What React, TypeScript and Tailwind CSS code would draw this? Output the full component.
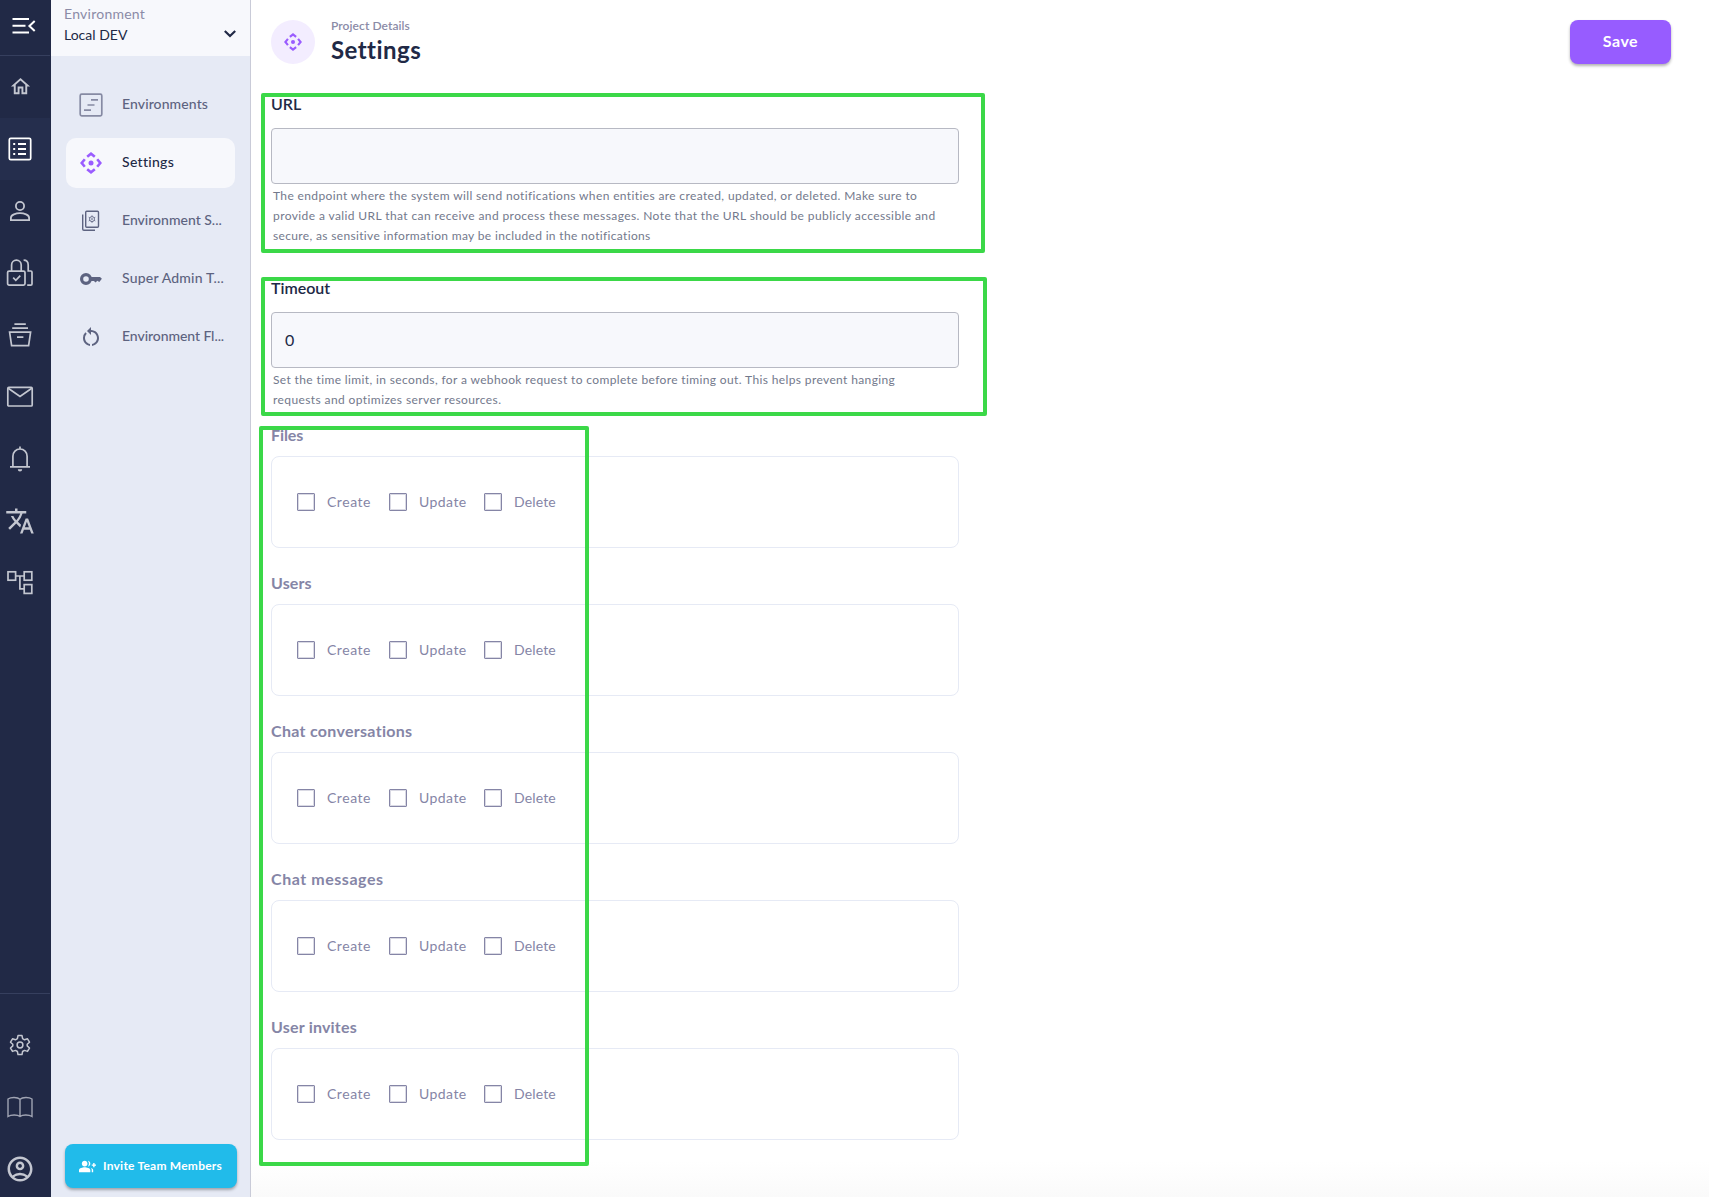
import type { ReactNode } from "react";
import { MdGroupAdd, MdOutlineAccountCircle, MdOutlineHome, MdRestartAlt, MdTranslate } from "react-icons/md";

function Icon({ children, className, w = 1.7 }: { children: ReactNode; className?: string; w?: number }) {
  return (
    <svg
      width="30"
      height="30"
      viewBox="0 0 30 30"
      fill="none"
      stroke="currentColor"
      strokeWidth={w}
      className={className ?? "shrink-0"}
    >
      {children}
    </svg>
  );
}

function Target({ size }: { size: number }) {
  return (
    <svg width={size} height={size} viewBox="0 0 22 22" fill="none" stroke="currentColor" strokeWidth="2.6" className="shrink-0 text-[#9a5cff]">
      <path d="M7.200 4.800 11 1.700l3.800 3.100M7.200 17.200l3.800 3.100 3.800-3.100M4.800 7.200 1.700 11l3.100 3.800M17.200 7.200l3.100 3.800-3.100 3.800" />
      <circle cx="11" cy="11" r="2.500" fill="currentColor" stroke="none" />
    </svg>
  );
}

const railIcons: ReactNode[] = [
  <MdOutlineHome size={23} className="-mt-[2px]" />,
  <Icon>
    <rect x="4.3" y="4.3" width="21.4" height="21.4" rx="1.5" />
    <path d="M8.2 10h2M8.2 15h2M8.2 20h2M13 10h8M13 15h8M13 20h8" strokeWidth="1.8" />
  </Icon>,
  <Icon w={1.8}>
    <circle cx="15" cy="10" r="4.1" />
    <path d="M5.9 24.1v-2.3c0-2.9 5-4.6 9.1-4.6s9.1 1.7 9.1 4.6v2.3z" />
  </Icon>,
  <Icon>
    <rect x="2.6" y="13.1" width="17.4" height="14" rx="1.5" />
    <path d="M6.600 12.900V7a4.800 4.800 0 0 1 9.600 0v5.900M8.200 19.700l2.600 2.600 4.500-4.600M18.600 2.200c3 0 4.600 2 4.600 4.800v6h2.600q1.200 0 1.200 1.200v11.700q0 1.200-1.200 1.200h-3.600" />
  </Icon>,
  <Icon>
    <path d="M9.400 4.200h11.400M7.200 8.200h15.800M4.600 12.200h21l-2 13.500H6.600zM12 17.200h6.400" />
  </Icon>,
  <Icon>
    <rect x="2.800" y="5.400" width="24.400" height="18.600" rx="1" />
    <path d="m3.200 6.200 11.800 8.200 11.800-8.200" />
  </Icon>,
  <Icon>
    <path d="M5 22.800h20M7.900 22.500V12.300c0-4.200 3-7.300 7.100-7.300s7.100 3.100 7.100 7.300V22.500M15 4.800V2.400" />
    <path d="M12.800 25.200h4.400a2.200 2.200 0 0 1-4.400 0z" fill="currentColor" stroke="none" />
  </Icon>,
  <MdTranslate size={30} />,
  <Icon>
    <rect x="3" y="3.800" width="7.600" height="8.400" />
    <rect x="19.200" y="3.800" width="7.600" height="8.400" />
    <rect x="19.200" y="16.600" width="7.600" height="8.800" />
    <path d="M10.600 8h8.600M14.900 8v12.800h4.300" />
  </Icon>,
];

const cog = "M13 5.600h4l.6 3.100 1.900 1.100 3-1 2 3.400-2.300 2.100v1.600l2.300 2.100-2 3.400-3-1-1.900 1.100-.6 3.100h-4l-.6-3.100-1.900-1.100-3 1-2-3.400 2.300-2.100v-1.600l-2.300-2.100 2-3.400 3 1 1.900-1.100z";

function RailCell({ children, className }: { children: ReactNode; className?: string }) {
  return (
    <div className={`flex h-[62px] w-[50px] items-center pl-[5px] ${className ?? ""}`}>
      <div className="flex w-[30px] shrink-0 justify-center">{children}</div>
    </div>
  );
}

function Rail() {
  return (
    <nav className="flex h-full w-[51px] shrink-0 flex-col bg-[#212946] text-[#c3c6d0]">
      <div className="flex h-[56px] w-[50px] shrink-0 items-center border-b border-[#363f5e] pl-[12px] text-white">
        <svg width="24" height="18" viewBox="0 0 24 18" fill="none" stroke="currentColor" strokeWidth="2" className="mt-[-3px]">
          <path d="M.5 2h16.500M.5 8.700h13M.5 15.500h16.500M22.700 4l-5.300 5 5.300 5" />
        </svg>
      </div>
      {railIcons.map((icon, i) => (
        <RailCell key={i} className={i === 1 ? "bg-[#252e4d] text-white" : ""}>{icon}</RailCell>
      ))}
      <div className="mt-auto w-[50px] border-t border-[#363f5e] pt-[20px]">
        <RailCell>
          <Icon w={1.5}>
            <path d={cog} strokeLinejoin="round" />
            <circle cx="15" cy="15" r="2.900" />
          </Icon>
        </RailCell>
        <RailCell className="text-[#a0a4b3]">
          <Icon w={1.4}>
            <path d="M15 7.300C12.500 5 6 5 3 7v17.500c3-2 9.500-2 12 0 2.500-2 9-2 12 0V7C24 5 17.500 5 15 7.300zV24" />
          </Icon>
        </RailCell>
        <div className="h-[59px]">
          <RailCell><MdOutlineAccountCircle size={30} className="shrink-0" /></RailCell>
        </div>
      </div>
    </nav>
  );
}

const navItems: { label: string; track: string; icon: ReactNode; active?: boolean }[] = [
  {
    label: "Environments",
    track: "tracking-[0.1px]",
    icon: (
      <Icon className="text-[#868aa3]">
        <rect x="4.200" y="4.200" width="21.600" height="21.600" rx="1.500" />
        <path d="M15 9.800h7M11.500 15h7M8 20.200h7" />
      </Icon>
    ),
  },
  { label: "Settings", track: "tracking-[0.3px]", icon: <Target size={22} />, active: true },
  {
    label: "Environment S...",
    track: "tracking-[0px]",
    icon: (
      <Icon w={1.400}>
        <rect x="9.700" y="5.200" width="12.800" height="16" rx="1" />
        <path d="M6.700 8.500v14.500q0 1.200 1.200 1.200H19" />
        <path d="M16 9.300v7.600M12.700 11.200l6.600 3.800M19.300 11.200l-6.600 3.800" strokeWidth="0.800" />
        <circle cx="16" cy="13.100" r="2.500" fill="#e6eaf5" strokeWidth="0.900" />
        <circle cx="16" cy="13.100" r="0.700" strokeWidth="0.600" />
      </Icon>
    ),
  },
  {
    label: "Super Admin T...",
    track: "tracking-[0.2px]",
    icon: (
      <Icon>
        <circle cx="10" cy="15" r="4.400" strokeWidth="3.200" />
        <path d="M14.500 12.900H24l1.900 1.900-2.600 3.200-2-1.200-1.700 1.600-1.700-1.300h-3.300z" fill="currentColor" stroke="none" />
      </Icon>
    ),
  },
  { label: "Environment Fl...", track: "tracking-[-0.070px]", icon: <MdRestartAlt size={24} className="mr-[3px] ml-[3px] shrink-0" /> },
];

function Sidebar() {
  return (
    <aside className="flex h-full w-[200px] shrink-0 flex-col border-r border-[#c9cbd8] bg-[#e6eaf5]">
      <div className="flex h-[56px] shrink-0 items-start justify-between bg-[#f7f8fc] pr-[14px] pl-[13px]">
        <div className="pt-[3px] text-[14px] leading-[21px] text-[#212946]">
          <div className="tracking-[0.250px] text-[#8b8ba7]">Environment</div>
          <div>Local DEV</div>
        </div>
        <svg width="12" height="8" viewBox="0 0 12 8" fill="none" stroke="#212946" strokeWidth="2.200" className="mt-[30px]">
          <path d="m.8 1 5.200 5 5.200-5" />
        </svg>
      </div>
      <ul className="flex flex-col gap-2 pt-[24px] pr-[15px] pl-[15px]">
        {navItems.map((item) => (
          <li
            key={item.label}
            className={`flex h-[50px] items-center rounded-[10px] pl-[10px] text-[14px] font-medium whitespace-nowrap ${item.active ? "bg-[#f7f8fc] text-[#212946]" : "text-[#5d6380]"}`}
          >
            <span className="flex w-[30px] shrink-0 items-center justify-center">{item.icon}</span>
            <span className={`ml-[16px] pb-[2px] leading-5 ${item.track}`}>{item.label}</span>
          </li>
        ))}
      </ul>
      <button className="mt-auto mb-[9px] ml-[14px] flex h-[44px] w-[172px] shrink-0 items-center rounded-lg bg-[#21bbea] pl-[14px] text-[12px] font-bold whitespace-nowrap text-white shadow-[0_2px_3px_rgba(0,0,0,0.3)]">
        <MdGroupAdd size={17} className="shrink-0" />
        <span className="ml-[7px] tracking-[0.230px]">Invite Team Members</span>
      </button>
    </aside>
  );
}

function Help({ lines }: { lines: [string, string][] }) {
  return (
    <div className="mt-[2px] ml-[2px] text-[12px] leading-[20px] whitespace-nowrap text-[#73798c]">
      {lines.map(([text, track]) => (
        <div key={text} className={track}>{text}</div>
      ))}
    </div>
  );
}

function Field({ label, value, lines, frame }: { label: string; value: string; lines: [string, string][]; frame: string }) {
  return (
    <section className="relative w-[688px] text-[#212946]">
      <div className="text-[16px] leading-5 font-semibold">{label}</div>
      <div className="mt-[14px] flex h-[56px] items-center rounded-[4px] border border-[#b7b9c3] bg-[#f7f8fc] px-[13px] text-[16px]">{value}</div>
      <Help lines={lines} />
      <div className={`absolute rounded-[2px] border-4 border-[#3bd848] ${frame}`} />
    </section>
  );
}

const actions: [string, string, string][] = [
  ["Create", "w-[92px]", "tracking-[0.550px]"],
  ["Update", "w-[95px]", "tracking-[0.450px]"],
  ["Delete", "w-[90px]", "tracking-[0.150px]"],
];

function Group({ title, track }: { title: string; track: string }) {
  return (
    <section className="h-[148px] w-[688px] text-[#8585a6]">
      <h2 className={`text-[16px] leading-5 font-bold ${track}`}>{title}</h2>
      <div className="mt-[11px] flex h-[92px] items-center rounded-lg border border-[#e6eaf5] pl-[25px]">
        {actions.map(([name, width, spacing]) => (
          <label key={name} className={`flex items-center ${width}`}>
            <span className="size-[18px] shrink-0 rounded-[1px] border-[1.500px] border-[#8585a6] shadow-[inset_0_0_0_1px_rgba(133,133,166,0.3)]" />
            <span className={`ml-[12px] pb-[1px] text-[14px] leading-5 ${spacing}`}>{name}</span>
          </label>
        ))}
      </div>
    </section>
  );
}

const groups: [string, string][] = [
  ["Files", "tracking-[-0.100px]"],
  ["Users", "tracking-[0.100px]"],
  ["Chat conversations", "tracking-[0.300px]"],
  ["Chat messages", "tracking-[0.550px]"],
  ["User invites", "tracking-[0.200px]"],
];

export default function App() {
  return (
    <div className="flex h-[1197px] w-[1709px] overflow-hidden bg-white font-['Lato',sans-serif]">
      <Rail />
      <Sidebar />
      <main className="flex h-full grow flex-col bg-linear-to-b from-white from-97% to-[#fafafa] pr-[38px] pl-[20px]">
        <header className="mt-[20px] flex h-[44px] shrink-0 items-center">
          <div className="flex size-[44px] items-center justify-center rounded-full bg-[#f3edff]">
            <Target size={18} />
          </div>
          <div className="ml-[16px]">
            <div className="-mt-[2px] text-[12px] leading-[17px] font-semibold tracking-[0.080px] text-[#8b8ba7]">Project Details</div>
            <h1 className="text-[24px] leading-[32px] font-bold tracking-[0.450px] text-[#212946]">Settings</h1>
          </div>
          <button className="ml-auto flex h-[44px] w-[101px] items-center justify-center rounded-lg bg-[#975cff] pb-[2px] text-[16px] font-bold tracking-[0.500px] text-white shadow-[0_2px_3px_rgba(0,0,0,0.3)]">Save</button>
        </header>
        <div className="mt-[30px] flex flex-col gap-[32px]">
          <Field
            label="URL"
            value=""
            frame="-top-[1px] -left-[10px] h-[160px] w-[724px]"
            lines={[
              ["The endpoint where the system will send notifications when entities are created, updated, or deleted. Make sure to", "tracking-[0.370px]"],
              ["provide a valid URL that can receive and process these messages. Note that the URL should be publicly accessible and", "tracking-[0.400px]"],
              ["secure, as sensitive information may be included in the notifications", "tracking-[0.340px]"],
            ]}
          />
          <Field
            label="Timeout"
            value="0"
            frame="-top-[1px] -left-[10px] h-[139px] w-[726px]"
            lines={[
              ["Set the time limit, in seconds, for a webhook request to complete before timing out. This helps prevent hanging", "tracking-[0.370px]"],
              ["requests and optimizes server resources.", "tracking-[0.400px]"],
            ]}
          />
        </div>
        <div className="relative mt-[15px]">
          {groups.map(([title, track]) => (
            <Group key={title} title={title} track={track} />
          ))}
          <div className="absolute top-[1px] -left-[12px] h-[740px] w-[330px] rounded-[2px] border-4 border-[#3bd848]" />
        </div>
      </main>
    </div>
  );
}
